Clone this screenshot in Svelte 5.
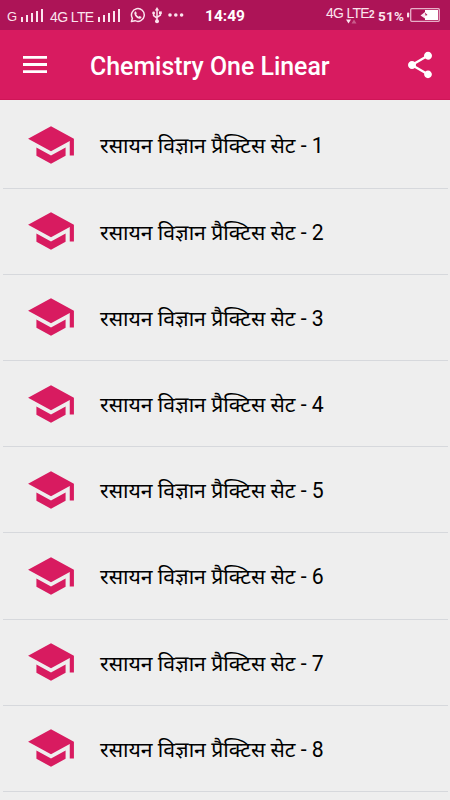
<script lang="ts">
  const sets = [1, 2, 3, 4, 5, 6, 7, 8]
  const bars = [5, 7, 9, 11, 13]
</script>

{#snippet signal()}
  <svg class="signal" width="24" height="14" viewBox="0 0 24 14">
    {#each bars as h, i (h)}
      <rect x={i * 5} y={14 - h} width="2" height={h} />
    {/each}
  </svg>
{/snippet}

<div class="screen">
  <div class="status">
    <div class="status-left">
      <span class="net-g">G</span>
      {@render signal()}
      <span class="net-lte">4G LTE</span>
      {@render signal()}
      <svg class="whatsapp" width="16" height="16" viewBox="0 0 16 16">
        <path d="M1.4 14.6 2.4 11.3A6.4 6.4 0 1 1 5 13.7Z" fill="none" stroke="currentColor" stroke-width="1.5" stroke-linejoin="round" />
        <path d="M5.7 4.3 6.8 6.3 6.2 7.2Q7 8.8 8.7 9.7L9.6 8.9 11.6 10Q11.2 12 9.5 11.7 5.2 10.8 4.3 6.4 4.3 4.6 5.7 4.3Z" />
      </svg>
      <svg class="usb" width="10" height="17" viewBox="0 0 10 17">
        <path d="M5 2V14M1.6 6V8.6L5 11.2M8.4 5.5V8L5 10.4" fill="none" stroke="currentColor" stroke-width="1.5" />
        <path d="M5 0 7.2 3.4H2.8Z" />
        <circle cx="5" cy="14.2" r="2" />
        <circle cx="1.6" cy="6" r="1.4" />
        <path d="M7 4.4H9.8V7.1H7Z" />
      </svg>
      <svg class="dots" width="16" height="4" viewBox="0 0 16 4">
        <circle cx="2" cy="2" r="1.8" />
        <circle cx="7.8" cy="2" r="1.8" />
        <circle cx="13.6" cy="2" r="1.8" />
      </svg>
    </div>
    <span class="clock">14:49</span>
    <div class="status-right">
      <span class="net-data">
        4G LTE<b>2</b>
        <svg class="arrows" width="11" height="5" viewBox="0 0 11 5">
          <path d="M0 .5H5L2.5 4.5Z" />
          <path d="M5.5 4.5H10.5L8 .5Z" opacity=".35" />
        </svg>
      </span>
      <span class="percent">51%</span>
      <svg class="battery" width="33" height="14" viewBox="0 0 33 14">
        <rect x="3.7" y=".7" width="28.6" height="12.6" rx="1" fill="none" stroke="currentColor" stroke-width="1.3" opacity=".75" />
        <rect x="0" y="4.5" width="2.2" height="5" rx="1" />
        <rect x="18" y="2" width="13" height="10" fill="#fff" />
        <path d="M13.5 7.5 18 4V10.5Z" />
        <path d="M18 4.5 20.5 7 18.5 7.8Z" fill="#ad1457" />
      </svg>
    </div>
  </div>

  <header class="toolbar">
    <svg class="menu" width="24" height="18" viewBox="0 0 24 18">
      <path d="M0 0H24V2.8H0ZM0 7.1H24V9.9H0ZM0 14.2H24V17H0Z" />
    </svg>
    <h1>Chemistry One Linear</h1>
    <svg class="share" width="32" height="32" viewBox="0 0 24 24">
      <path d="M18 16.08c-.76 0-1.44.3-1.96.77L8.91 12.7c.05-.23.09-.46.09-.7s-.04-.47-.09-.7l7.05-4.11c.54.5 1.25.81 2.04.81 1.66 0 3-1.34 3-3s-1.34-3-3-3-3 1.34-3 3c0 .24.04.47.09.7L8.04 9.81C7.5 9.31 6.79 9 6 9c-1.66 0-3 1.34-3 3s1.34 3 3 3c.79 0 1.5-.31 2.04-.81l7.12 4.16c-.05.21-.08.43-.08.65 0 1.61 1.31 2.92 2.92 2.92s2.92-1.31 2.92-2.92-1.31-2.92-2.92-2.92z" />
    </svg>
  </header>

  <ul>
    {#each sets as n (n)}
      <li>
        <svg class="cap" width="50" height="50" viewBox="0 0 24 24">
          <path d="M5 13.18v4L12 21l7-3.82v-4L12 17l-7-3.82zM12 3L1 9l11 6 9-4.91V17h2V9L12 3z" />
        </svg>
        <span class="label">रसायन विज्ञान प्रैक्टिस सेट - {n}</span>
      </li>
    {/each}
  </ul>
</div>

<style>
  :global(body) {
    overflow: hidden;
  }
  .screen {
    display: flex;
    flex-direction: column;
    height: 800px;
    overflow: hidden;
    background: #eee;
    color: #000;
    font-family: Roboto, 'Noto Sans', 'Noto Sans Devanagari', sans-serif;
  }
  svg {
    flex: none;
    display: block;
    fill: currentColor;
  }
  .status {
    flex: none;
    display: grid;
    grid-template-columns: 205px 1fr auto;
    box-sizing: border-box;
    height: 30px;
    padding: 0 10px 0 7px;
    background: #ad1457;
    color: #fbe4ee;
    white-space: nowrap;
    line-height: 18px;
  }
  .status-left,
  .status-right {
    display: flex;
    align-items: flex-start;
  }
  .net-g,
  .net-lte {
    margin-top: 8px;
    font-family: 'Liberation Sans', sans-serif;
    font-size: 14px;
  }
  .net-g {
    width: 14px;
    font-size: 13px;
  }
  .net-lte {
    width: 48px;
    letter-spacing: -0.6px;
  }
  .signal {
    margin-top: 8px;
  }
  .net-g + .signal {
    margin-right: 5px;
  }
  .whatsapp {
    margin: 7px 0 0 8px;
  }
  .usb {
    margin: 7px 0 0 6px;
  }
  .dots {
    margin: 13px 0 0 6px;
  }
  .clock {
    margin: 7px 0 0 -7px;
    color: #fff;
    font-size: 15.5px;
    font-weight: 700;
  }
  .net-data {
    position: relative;
    margin-top: 4px;
    width: 52px;
    font-family: 'Liberation Sans', sans-serif;
    font-size: 14px;
    letter-spacing: -0.7px;
  }
  .net-data b {
    font-size: 10px;
  }
  .arrows {
    position: absolute;
    left: 20px;
    top: 15px;
  }
  .percent {
    width: 29px;
    margin-top: 7px;
    font-size: 13.5px;
    font-weight: 700;
    letter-spacing: 0.3px;
  }
  .battery {
    margin-top: 8px;
  }
  .toolbar {
    flex: none;
    display: flex;
    align-items: center;
    box-sizing: border-box;
    height: 70px;
    padding: 0 14px 0 23px;
    border-bottom: 1px solid #cf1557;
    background: #d81b60;
    color: #fff;
  }
  h1 {
    flex: 1;
    margin: 4px 0 0 43px;
    font-size: 24.9px;
    font-weight: 500;
    line-height: 32px;
    white-space: nowrap;
  }
  ul {
    margin: 2.4px 2px 0 3px;
    padding: 0;
    list-style: none;
  }
  li {
    display: flex;
    align-items: center;
    box-sizing: border-box;
    height: 86.2px;
    padding-left: 23px;
    border-bottom: 1px solid #d6d8dc;
  }
  .cap {
    color: #d81b60;
  }
  .label {
    margin: 3px 0 0 24px;
    font-size: 21.2px;
    line-height: 30px;
    white-space: nowrap;
  }
</style>
